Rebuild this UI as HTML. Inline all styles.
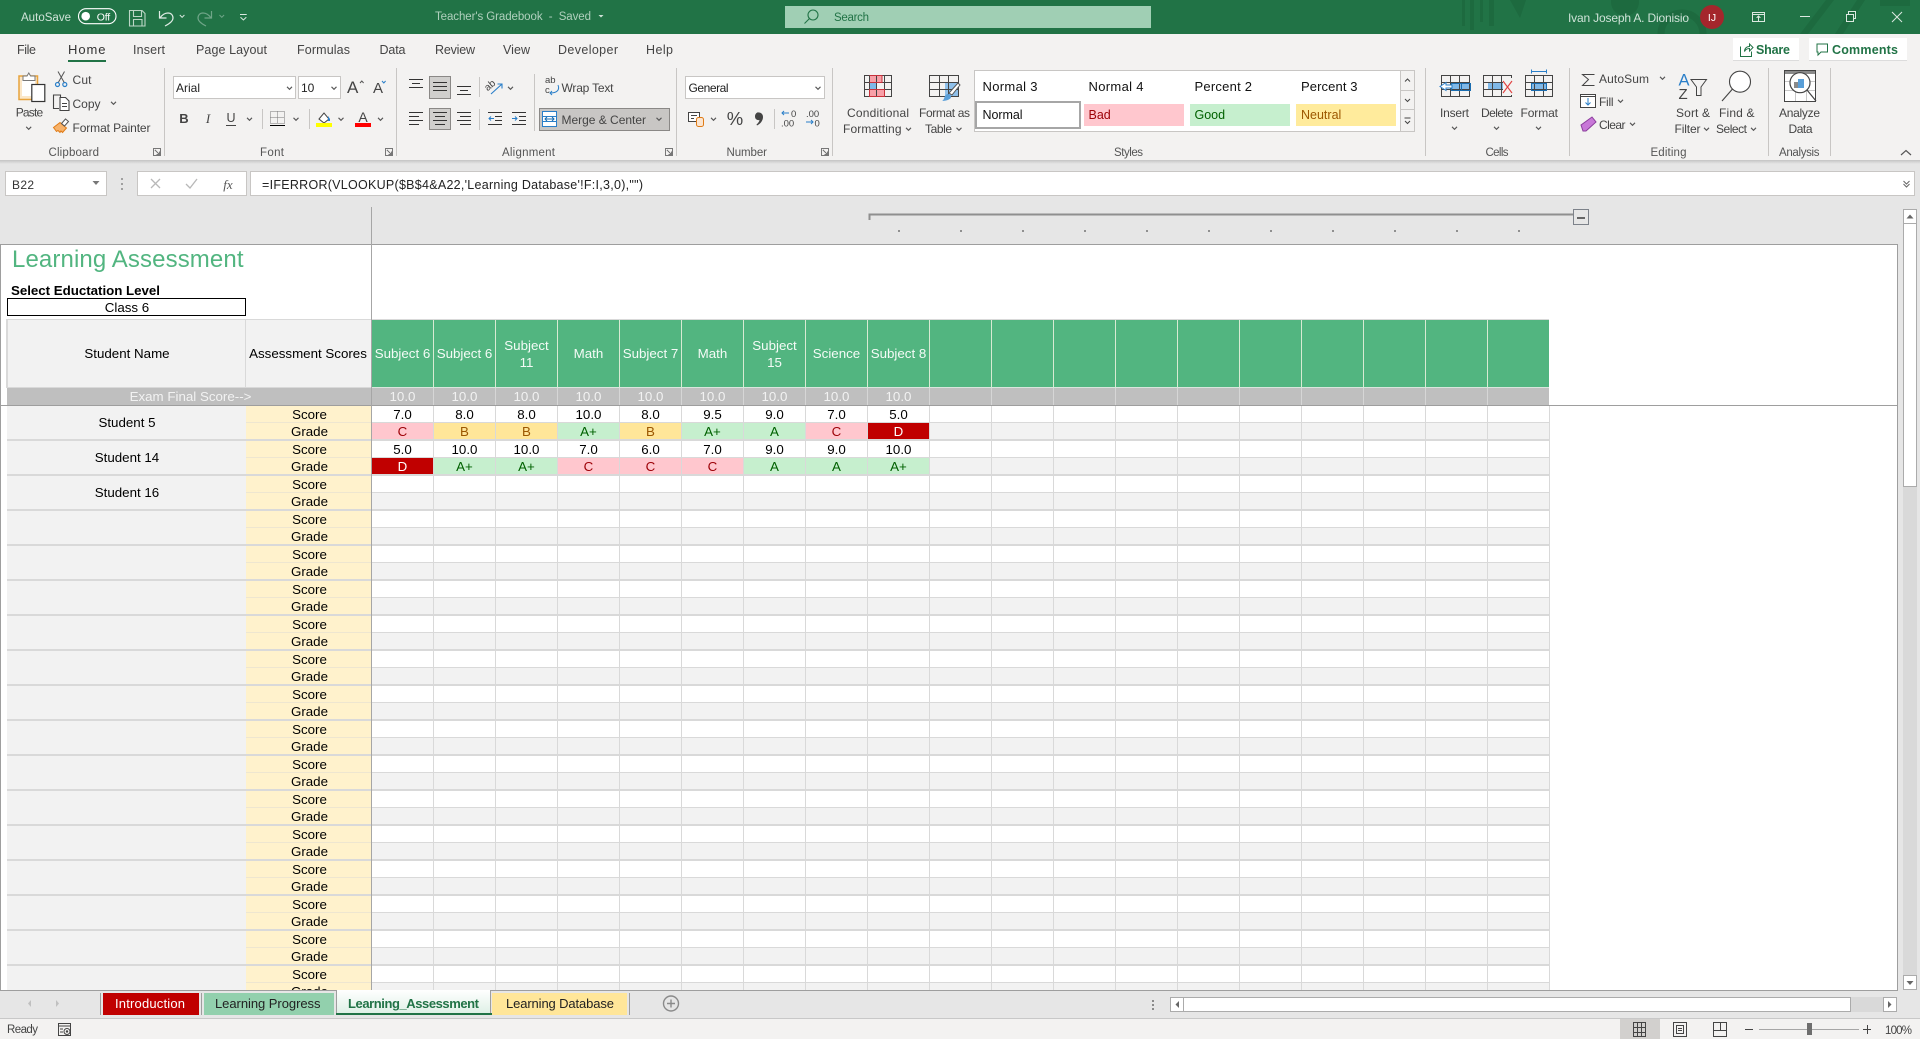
<!DOCTYPE html>
<html><head><meta charset="utf-8"><title>Teacher's Gradebook - Excel</title>
<style>
html,body{margin:0;padding:0;width:1920px;height:1039px;overflow:hidden;background:#e6e6e6}
svg{display:block;font-family:"Liberation Sans",Arial,sans-serif}
text{font-size:12px;fill:#444;white-space:pre}
.m{text-anchor:middle}
.tb{font-size:12.5px}
.h{font-size:13.33px;fill:#f4fbf6;text-anchor:middle}
.g{font-size:13.33px;fill:#f2f2f2;text-anchor:middle}
.s{font-size:13.33px;fill:#000;text-anchor:middle}
.r{fill:#9c0006}.y{fill:#9c5700}.n{fill:#006100}.w{fill:#fff}
.lb{font-size:11.5px;fill:#555}
.cr{shape-rendering:crispEdges}
.i{fill:none;stroke:#444;stroke-width:1}
</style></head><body>
<svg width="1920" height="1039" viewBox="0 0 1920 1039" xmlns="http://www.w3.org/2000/svg">
<defs>
<path id="ch" d="M-2.5-1.2 0 1.3 2.5-1.2" fill="none" stroke="#555" stroke-width="1.1"/>
<pattern id="gp" x="371" y="406" width="62" height="35" patternUnits="userSpaceOnUse">
<rect width="62" height="16" fill="#fff"/><rect y="16" width="62" height="1" fill="#d9d9d9"/><rect y="17" width="62" height="16" fill="#f2f2f2"/><rect y="33" width="62" height="2" fill="#d9d9d9"/><rect width="1" height="35" fill="#d9d9d9"/></pattern>
<pattern id="yp" x="246" y="406" width="125" height="35" patternUnits="userSpaceOnUse">
<rect width="125" height="33" fill="#fff2cc"/><rect y="16" width="125" height="1" fill="#eee6d0"/><rect y="33" width="125" height="2" fill="#d9d9d9"/></pattern>
<pattern id="np" x="7" y="406" width="239" height="35" patternUnits="userSpaceOnUse">
<rect width="239" height="33" fill="#f2f2f2"/><rect y="33" width="239" height="2" fill="#d9d9d9"/></pattern>
<linearGradient id="sh" x1="0" y1="0" x2="0" y2="1"><stop offset="0" stop-color="#c4c4c4"/><stop offset="1" stop-color="#e6e6e6"/></linearGradient>
<linearGradient id="at" x1="0" y1="0" x2="0" y2="1"><stop offset="0" stop-color="#fff"/><stop offset="1" stop-color="#dff0e6"/></linearGradient>
</defs>

<!-- sheet -->
<rect class="cr" x="1" y="245" width="1897" height="746" fill="#fff"/>
<rect class="cr" x="0" y="244" width="1898" height="1" fill="#9e9e9e"/>
<rect class="cr" x="0" y="244" width="1" height="746" fill="#9e9e9e"/>
<rect class="cr" x="1897" y="244" width="1" height="746" fill="#9e9e9e"/>

<!-- outline -->
<path class="cr" d="M869.5 220v-5.5H1573" fill="none" stroke="#8f8f8f" stroke-width="2"/>
<rect class="cr" x="1573.5" y="209.5" width="15" height="15" fill="#e6e6e6" stroke="#7d828a"/>
<rect class="cr" x="1577" y="217" width="8" height="2" fill="#666"/>
<g fill="#8f8f8f" class="cr"><rect x="898" y="230" width="2" height="2"/><rect x="960" y="230" width="2" height="2"/><rect x="1022" y="230" width="2" height="2"/><rect x="1084" y="230" width="2" height="2"/><rect x="1146" y="230" width="2" height="2"/><rect x="1208" y="230" width="2" height="2"/><rect x="1270" y="230" width="2" height="2"/><rect x="1332" y="230" width="2" height="2"/><rect x="1394" y="230" width="2" height="2"/><rect x="1456" y="230" width="2" height="2"/><rect x="1518" y="230" width="2" height="2"/></g>

<!-- title block -->
<text x="12" y="267" textLength="231.5" style="font-size:24px;fill:#52b580">Learning Assessment</text>
<text x="11" y="295" textLength="149" style="font-size:13.33px;font-weight:bold;fill:#000">Select Eductation Level</text>
<rect class="cr" x="7.5" y="298.5" width="238" height="17" fill="#fff" stroke="#000" stroke-width="1"/>
<text class="s" x="127" y="312">Class 6</text>

<!-- header -->
<rect class="cr" x="6" y="319" width="365" height="69" fill="#d9d9d9"/>
<rect class="cr" x="8" y="320" width="237" height="67" fill="#f2f2f2"/>
<rect class="cr" x="246" y="320" width="125" height="67" fill="#f2f2f2"/>
<rect class="cr" x="371" y="320" width="1178" height="67" fill="#52b580"/>
<rect class="cr" x="371" y="319" width="1178" height="1" fill="#d9d9d9"/>
<rect class="cr" x="371" y="387" width="1178" height="1" fill="#d9e6dd"/>
<g fill="#d9ead3" class="cr"><rect x="433" y="320" width="1" height="67"/><rect x="495" y="320" width="1" height="67"/><rect x="557" y="320" width="1" height="67"/><rect x="619" y="320" width="1" height="67"/><rect x="681" y="320" width="1" height="67"/><rect x="743" y="320" width="1" height="67"/><rect x="805" y="320" width="1" height="67"/><rect x="867" y="320" width="1" height="67"/><rect x="929" y="320" width="1" height="67"/><rect x="991" y="320" width="1" height="67"/><rect x="1053" y="320" width="1" height="67"/><rect x="1115" y="320" width="1" height="67"/><rect x="1177" y="320" width="1" height="67"/><rect x="1239" y="320" width="1" height="67"/><rect x="1301" y="320" width="1" height="67"/><rect x="1363" y="320" width="1" height="67"/><rect x="1425" y="320" width="1" height="67"/><rect x="1487" y="320" width="1" height="67"/></g>
<text class="s" x="127" y="358">Student Name</text>
<text class="s" x="308" y="358">Assessment Scores</text>
<g transform="translate(.5 0)">
<text class="h" x="402" y="358">Subject 6</text>
<text class="h" x="464" y="358">Subject 6</text>
<text class="h" x="526" y="350">Subject</text><text class="h" x="526" y="367">11</text>
<text class="h" x="588" y="358">Math</text>
<text class="h" x="650" y="358">Subject 7</text>
<text class="h" x="712" y="358">Math</text>
<text class="h" x="774" y="350">Subject</text><text class="h" x="774" y="367">15</text>
<text class="h" x="836" y="358">Science</text>
<text class="h" x="898" y="358">Subject 8</text>
</g>

<!-- exam row -->
<rect class="cr" x="7" y="388" width="1542" height="17" fill="#bfbfbf"/>
<g fill="#d6d6d6" class="cr"><rect x="371" y="388" width="1" height="17"/><rect x="433" y="388" width="1" height="17"/><rect x="495" y="388" width="1" height="17"/><rect x="557" y="388" width="1" height="17"/><rect x="619" y="388" width="1" height="17"/><rect x="681" y="388" width="1" height="17"/><rect x="743" y="388" width="1" height="17"/><rect x="805" y="388" width="1" height="17"/><rect x="867" y="388" width="1" height="17"/><rect x="929" y="388" width="1" height="17"/><rect x="991" y="388" width="1" height="17"/><rect x="1053" y="388" width="1" height="17"/><rect x="1115" y="388" width="1" height="17"/><rect x="1177" y="388" width="1" height="17"/><rect x="1239" y="388" width="1" height="17"/><rect x="1301" y="388" width="1" height="17"/><rect x="1363" y="388" width="1" height="17"/><rect x="1425" y="388" width="1" height="17"/><rect x="1487" y="388" width="1" height="17"/></g>
<text class="g" x="190.500" y="401">Exam Final Score--&gt;</text>
<g transform="translate(.5 0)"><text class="g" x="402" y="401">10.0</text><text class="g" x="464" y="401">10.0</text><text class="g" x="526" y="401">10.0</text><text class="g" x="588" y="401">10.0</text><text class="g" x="650" y="401">10.0</text><text class="g" x="712" y="401">10.0</text><text class="g" x="774" y="401">10.0</text><text class="g" x="836" y="401">10.0</text><text class="g" x="898" y="401">10.0</text></g>

<!-- body grid -->
<rect class="cr" x="7" y="406" width="239" height="585" fill="url(#np)"/>
<rect class="cr" x="246" y="406" width="125" height="585" fill="url(#yp)"/>
<rect class="cr" x="371" y="406" width="1179" height="585" fill="url(#gp)"/>
<rect class="cr" x="0" y="405" width="1898" height="1" fill="#9e9e9e"/>
<rect class="cr" x="371" y="207" width="1" height="784" fill="#a6a6a6"/>

<!-- grade fills -->
<g class="cr">
<rect x="372" y="423" width="61" height="16" fill="#ffc7ce"/><rect x="434" y="423" width="61" height="16" fill="#ffe699"/><rect x="496" y="423" width="61" height="16" fill="#ffe699"/><rect x="558" y="423" width="61" height="16" fill="#c6efce"/><rect x="620" y="423" width="61" height="16" fill="#ffe699"/><rect x="682" y="423" width="61" height="16" fill="#c6efce"/><rect x="744" y="423" width="61" height="16" fill="#c6efce"/><rect x="806" y="423" width="61" height="16" fill="#ffc7ce"/><rect x="868" y="423" width="61" height="16" fill="#c00000"/>
<rect x="372" y="458" width="61" height="16" fill="#c00000"/><rect x="434" y="458" width="61" height="16" fill="#c6efce"/><rect x="496" y="458" width="61" height="16" fill="#c6efce"/><rect x="558" y="458" width="61" height="16" fill="#ffc7ce"/><rect x="620" y="458" width="61" height="16" fill="#ffc7ce"/><rect x="682" y="458" width="61" height="16" fill="#ffc7ce"/><rect x="744" y="458" width="61" height="16" fill="#c6efce"/><rect x="806" y="458" width="61" height="16" fill="#c6efce"/><rect x="868" y="458" width="61" height="16" fill="#c6efce"/>
</g>
<g transform="translate(.5 0)">
<text class="s" x="402" y="419">7.0</text><text class="s" x="464" y="419">8.0</text><text class="s" x="526" y="419">8.0</text><text class="s" x="588" y="419">10.0</text><text class="s" x="650" y="419">8.0</text><text class="s" x="712" y="419">9.5</text><text class="s" x="774" y="419">9.0</text><text class="s" x="836" y="419">7.0</text><text class="s" x="898" y="419">5.0</text>
<text class="s r" x="402" y="436">C</text><text class="s y" x="464" y="436">B</text><text class="s y" x="526" y="436">B</text><text class="s n" x="588" y="436">A+</text><text class="s y" x="650" y="436">B</text><text class="s n" x="712" y="436">A+</text><text class="s n" x="774" y="436">A</text><text class="s r" x="836" y="436">C</text><text class="s w" x="898" y="436">D</text>
<text class="s" x="402" y="454">5.0</text><text class="s" x="464" y="454">10.0</text><text class="s" x="526" y="454">10.0</text><text class="s" x="588" y="454">7.0</text><text class="s" x="650" y="454">6.0</text><text class="s" x="712" y="454">7.0</text><text class="s" x="774" y="454">9.0</text><text class="s" x="836" y="454">9.0</text><text class="s" x="898" y="454">10.0</text>
<text class="s w" x="402" y="471">D</text><text class="s n" x="464" y="471">A+</text><text class="s n" x="526" y="471">A+</text><text class="s r" x="588" y="471">C</text><text class="s r" x="650" y="471">C</text><text class="s r" x="712" y="471">C</text><text class="s n" x="774" y="471">A</text><text class="s n" x="836" y="471">A</text><text class="s n" x="898" y="471">A+</text>
</g>
<text class="s" x="127" y="427">Student 5</text><text class="s" x="127" y="462">Student 14</text><text class="s" x="127" y="497">Student 16</text>
<g transform="translate(.5 0)">
<text class="s" x="309" y="419">Score</text><text class="s" x="309" y="436">Grade</text>
<text class="s" x="309" y="454">Score</text><text class="s" x="309" y="471">Grade</text>
<text class="s" x="309" y="489">Score</text><text class="s" x="309" y="506">Grade</text>
<text class="s" x="309" y="524">Score</text><text class="s" x="309" y="541">Grade</text>
<text class="s" x="309" y="559">Score</text><text class="s" x="309" y="576">Grade</text>
<text class="s" x="309" y="594">Score</text><text class="s" x="309" y="611">Grade</text>
<text class="s" x="309" y="629">Score</text><text class="s" x="309" y="646">Grade</text>
<text class="s" x="309" y="664">Score</text><text class="s" x="309" y="681">Grade</text>
<text class="s" x="309" y="699">Score</text><text class="s" x="309" y="716">Grade</text>
<text class="s" x="309" y="734">Score</text><text class="s" x="309" y="751">Grade</text>
<text class="s" x="309" y="769">Score</text><text class="s" x="309" y="786">Grade</text>
<text class="s" x="309" y="804">Score</text><text class="s" x="309" y="821">Grade</text>
<text class="s" x="309" y="839">Score</text><text class="s" x="309" y="856">Grade</text>
<text class="s" x="309" y="874">Score</text><text class="s" x="309" y="891">Grade</text>
<text class="s" x="309" y="909">Score</text><text class="s" x="309" y="926">Grade</text>
<text class="s" x="309" y="944">Score</text><text class="s" x="309" y="961">Grade</text>
<text class="s" x="309" y="979">Score</text><text class="s" x="309" y="996">Grade</text>
</g>

<!-- vertical scrollbar -->
<rect class="cr" x="1903" y="209" width="14" height="781" fill="#d9d9d9"/>
<rect class="cr" x="1903.5" y="223.5" width="13" height="263" fill="#fff" stroke="#ababab"/>
<rect class="cr" x="1903.5" y="209.5" width="13" height="14" fill="#fff" stroke="#ababab"/>
<path d="M1906.5 218.5h7l-3.5-4z" fill="#666"/>
<rect class="cr" x="1903.5" y="975.5" width="13" height="14" fill="#fff" stroke="#ababab"/>
<path d="M1906.5 981h7l-3.5 4z" fill="#666"/>

<!-- tab bar -->
<rect class="cr" x="0" y="990" width="1920" height="28" fill="#e6e6e6"/>
<rect class="cr" x="0" y="990" width="1898" height="1" fill="#9e9e9e"/>
<rect class="cr" x="0" y="1018" width="1920" height="1" fill="#c8c8c8"/>
<path d="M31 1000v7l-3-3.5zM56 1000v7l3-3.5z" fill="#c0c0c0"/>
<rect class="cr" x="100" y="993" width="1" height="22" fill="#9e9e9e"/>
<rect class="cr" x="103" y="993" width="96" height="22" fill="#c00000"/>
<text x="115" y="1008" textLength="70" style="font-size:13px;fill:#fff">Introduction</text>
<rect class="cr" x="201" y="993" width="1" height="22" fill="#9e9e9e"/>
<rect class="cr" x="204" y="993" width="130" height="22" fill="#92d0ad"/>
<text x="215" y="1008" textLength="105.5" style="font-size:13px;fill:#222">Learning Progress</text>
<rect class="cr" x="336" y="990" width="155" height="25" fill="#9e9e9e"/>
<rect class="cr" x="337" y="990" width="153" height="23" fill="url(#at)"/>
<rect class="cr" x="336" y="1013" width="156" height="2" fill="#217346"/>
<text x="348" y="1008" textLength="131" style="font-size:13px;font-weight:bold;fill:#217346">Learning_Assessment</text>
<rect class="cr" x="492" y="993" width="135" height="22" fill="#ffe699"/>
<text x="506" y="1008" textLength="108" style="font-size:13px;fill:#222">Learning Database</text>
<rect class="cr" x="629" y="993" width="1" height="22" fill="#9e9e9e"/>
<circle cx="671" cy="1003.5" r="7.5" fill="none" stroke="#8a8a8a" stroke-width="1.4"/>
<path d="M667 1003.5h8M671 999.5v8" stroke="#8a8a8a" stroke-width="1.4"/>
<g fill="#8a8a8a" class="cr"><rect x="1152" y="1000" width="2" height="2"/><rect x="1152" y="1004" width="2" height="2"/><rect x="1152" y="1008" width="2" height="2"/></g>
<rect class="cr" x="1170" y="997" width="727" height="15" fill="#d9d9d9"/>
<rect class="cr" x="1170.5" y="997.5" width="13" height="14" fill="#fff" stroke="#ababab"/>
<path d="M1179 1001v7l-3.5-3.5z" fill="#666"/>
<rect class="cr" x="1183.5" y="997.5" width="667" height="14" fill="#fff" stroke="#ababab"/>
<rect class="cr" x="1883.5" y="997.5" width="13" height="14" fill="#fff" stroke="#ababab"/>
<path d="M1888 1001v7l3.5-3.5z" fill="#666"/>

<!-- status bar -->
<rect class="cr" x="0" y="1019" width="1920" height="20" fill="#f3f2f1"/>
<text x="7" y="1033" textLength="31" style="font-size:11.5px;fill:#444">Ready</text>
<rect x="58.5" y="1023.5" width="12" height="12" class="i"/><path d="M58.5 1026h12M60 1029h3M60 1032h3" class="i"/><circle cx="67" cy="1031.5" r="3" fill="#f3f2f1" stroke="#444"/><circle cx="67" cy="1031.5" r="1.2" fill="#444"/>
<rect class="cr" x="1620" y="1019" width="40" height="20" fill="#d2d0ce"/>
<path class="cr" d="M1633.5 1022.5h12v14h-12zM1633.5 1027.5h12M1633.5 1032.5h12M1637.5 1022.5v14M1641.5 1022.5v14" fill="none" stroke="#444"/>
<path class="cr" d="M1673.5 1022.5h13v14h-13zM1676.5 1025.5h7v8h-7zM1678 1028.5h4M1678 1030.5h4" fill="none" stroke="#444"/>
<path class="cr" d="M1713.5 1022.5h13v14h-13zM1713.5 1030.5h13M1720.5 1022.5v8" fill="none" stroke="#444"/>
<rect class="cr" x="1745" y="1029" width="8" height="1" fill="#444"/>
<rect class="cr" x="1759" y="1029" width="100" height="1" fill="#a6a6a6"/>
<rect class="cr" x="1807" y="1023" width="5" height="12" fill="#6e6e6e"/>
<path class="cr" d="M1863 1029.5h8M1867.5 1025v9" stroke="#444"/>
<text x="1885" y="1034" textLength="27" style="font-size:11.5px;fill:#444">100%</text>

<!-- title bar -->
<rect class="cr" x="0" y="0" width="1920" height="34" fill="#217346"/>
<g fill="#1d6a3f">
<rect x="1462" y="0" width="3" height="26"/><rect x="1470" y="0" width="4" height="30"/><rect x="1480" y="0" width="3" height="22"/><rect x="1489" y="0" width="5" height="26"/>
<path d="M1510 0h16l-6 18z"/><circle cx="1625" cy="2" r="14"/><circle cx="1682" cy="34" r="21" fill="none" stroke="#1d6a3f" stroke-width="7"/>
<path d="M1800 34l26-34h8l-26 34zM1835 34l22-34h8l-22 34zM1880 0h30v6h-30z"/>
</g>
<text x="21" y="21" textLength="50" style="font-size:11.5px;fill:#cfe3d8">AutoSave</text>
<rect x="78.5" y="8.7" width="37.500" height="15" rx="7.500" fill="none" stroke="#fff" stroke-width="1.100"/>
<circle cx="85.700" cy="16.200" r="4.300" fill="#fff"/>
<text x="96.700" y="20.300" textLength="13.500" style="font-size:10.500px;fill:#fff">Off</text>
<path d="M129.500 10.500h12.500l3 3v12.500h-15.500zM133.500 10.500v6h8v-6M133.500 26v-6.500h8.500v6.500" fill="none" stroke="#bcd6c6" stroke-width="1.100"/>
<path d="M159.500 11v7h7M160 18c2-3 5-5 8-5 3 0 5 2 5 5 0 3-4 6-8 8" fill="none" stroke="#e0ece5" stroke-width="1.200"/>
<path d="M179.800 15l2.300 2.300 2.300-2.300" fill="none" stroke="#dce9e1"/>
<path d="M211.500 11v7h-7M211 18c-2-3-5-5-8-5-3 0-5 2-5 5 0 3 4 6 8 8" fill="none" stroke="#6fa588" stroke-width="1.200"/>
<path d="M219.500 15l2.300 2.300 2.300-2.300" fill="none" stroke="#6fa588"/>
<path d="M240 14.500h6.700M240.500 17.300l2.900 2.700 2.900-2.700" fill="none" stroke="#dce9e1"/>
<text x="435" y="20" textLength="156" style="font-size:11.5px;fill:#b0d0bd">Teacher's Gradebook  -  Saved</text>
<path d="M598.5 15h5l-2.500 2.500z" fill="#cfe3d8"/>
<rect class="cr" x="785" y="6" width="366" height="22" fill="#a0cfb4"/>
<circle cx="813" cy="15" r="5" fill="none" stroke="#217346" stroke-width="1.100"/><path d="M809.5 18.500l-5 5" stroke="#217346" stroke-width="1.100"/>
<text x="834" y="21" textLength="35" style="font-size:11.5px;fill:#217346">Search</text>
<text x="1568" y="22" textLength="121" style="font-size:12px;fill:#cfe3d8">Ivan Joseph A. Dionisio</text>
<circle cx="1712" cy="17" r="12" fill="#a4262c"/>
<text class="m" x="1712" y="21" style="font-size:10.5px;fill:#fff">IJ</text>
<path class="cr" d="M1752.5 12.500h12v9h-12zM1752.5 14.500h12M1758.5 21v-5M1756.5 18l2-2 2 2" fill="none" stroke="#dce9e1"/>
<path class="cr" d="M1800 16.500h10" stroke="#dce9e1"/>
<path class="cr" d="M1846.5 14.500h7v7h-7zM1848.5 14v-2.500h7v7h-2" fill="none" stroke="#dce9e1"/>
<path d="M1892 12l10 10M1902 12l-10 10" stroke="#dce9e1"/>

<!-- ribbon -->
<rect class="cr" x="0" y="34" width="1920" height="126" fill="#f3f2f1"/>
<rect class="cr" x="0" y="160" width="1920" height="4" fill="url(#sh)"/>
<text class="tb" x="17" y="54" textLength="19">File</text>
<text class="tb" x="68" y="54" textLength="37.5" style="font-size:13px;fill:#333">Home</text>
<rect class="cr" x="68" y="60" width="38" height="2" fill="#217346"/>
<text class="tb" x="133" y="54" textLength="32">Insert</text>
<text class="tb" x="196" y="54" textLength="71">Page Layout</text>
<text class="tb" x="297" y="54" textLength="53">Formulas</text>
<text class="tb" x="379.5" y="54" textLength="26">Data</text>
<text class="tb" x="435" y="54" textLength="40">Review</text>
<text class="tb" x="503" y="54" textLength="27">View</text>
<text class="tb" x="558" y="54" textLength="60">Developer</text>
<text class="tb" x="646" y="54" textLength="27">Help</text>
<rect class="cr" x="1733" y="38" width="66" height="22" fill="#fff"/><rect class="cr" x="1733" y="60" width="66" height="1" fill="#dcdcdc"/>
<rect class="cr" x="1809" y="38" width="98" height="22" fill="#fff"/><rect class="cr" x="1809" y="60" width="98" height="1" fill="#dcdcdc"/>
<path d="M1740.5 46.500v10h11v-5M1744.500 51.500c0-3 2-5 5-5v-2.500l3.500 3.500-3.500 3.500v-2.500c-2 0-4 1-5 3z" fill="none" stroke="#217346"/>
<text x="1756" y="54" textLength="34" style="font-size:12.5px;fill:#217346;font-weight:bold">Share</text>
<path d="M1817 44h10.500v8h-6.500l-3 3v-3h-1z" fill="none" stroke="#217346"/>
<text x="1832" y="54" textLength="66" style="font-size:12.5px;fill:#217346;font-weight:bold">Comments</text>

<!-- separators -->
<g fill="#c8c6c4" class="cr"><rect x="164" y="68" width="1" height="88"/><rect x="396" y="68" width="1" height="88"/><rect x="676" y="68" width="1" height="88"/><rect x="832" y="68" width="1" height="88"/><rect x="1425" y="68" width="1" height="88"/><rect x="1569" y="68" width="1" height="88"/><rect x="1768" y="68" width="1" height="88"/><rect x="1830" y="68" width="1" height="88"/><rect x="479" y="77" width="1" height="20"/><rect x="479" y="109" width="1" height="21"/><rect x="534" y="74" width="1" height="57"/><rect x="262" y="109" width="1" height="20"/><rect x="309" y="109" width="1" height="20"/><rect x="774" y="109" width="1" height="20"/></g>
<!-- group labels -->
<text class="lb" x="48.5" y="156" textLength="50.5">Clipboard</text>
<text class="lb" x="260" y="156" textLength="24">Font</text>
<text class="lb" x="502" y="156" textLength="53">Alignment</text>
<text class="lb" x="726.5" y="156" textLength="40.5">Number</text>
<text class="lb" x="1114" y="156" textLength="29">Styles</text>
<text class="lb" x="1485.5" y="156" textLength="23">Cells</text>
<text class="lb" x="1650.5" y="156" textLength="36">Editing</text>
<text class="lb" x="1779" y="156" textLength="40.5">Analysis</text>
<g fill="none" stroke="#777"><path class="cr" d="M153.5 148.500h7v7h-7zM155 150l4 4M159.5 151.500v3h-3"/><path class="cr" d="M385.5 148.500h7v7h-7zM387 150l4 4M391.5 151.500v3h-3"/><path class="cr" d="M665.5 148.500h7v7h-7zM667 150l4 4M671.5 151.500v3h-3"/><path class="cr" d="M821.5 148.500h7v7h-7zM823 150l4 4M827.5 151.500v3h-3"/></g>
<path d="M1901 155l5-4.500 5 4.500" fill="none" stroke="#555" stroke-width="1.200"/>

<!-- clipboard -->
<path d="M19 76h18.500v23.500H19z" fill="#fbe7c8" stroke="#e8a33c" stroke-width="1.500"/>
<rect x="22" y="80" width="13" height="16" fill="#fff"/>
<path d="M23 80.500v-4.500h4l1.800-3 1.800 3h4.400v4.500z" fill="#fff" stroke="#777"/>
<rect x="31.800" y="84.500" width="13" height="17" fill="#fff" stroke="#333" stroke-width="1.200"/>
<text x="15.700" y="116.500" textLength="27.500" style="font-size:12px">Paste</text>
<use href="#ch" x="28.700" y="128"/>
<path d="M58 71.500l6.500 11.500M64.500 71.500L58 83" stroke="#555" fill="none"/><circle cx="57.500" cy="84.500" r="2" fill="none" stroke="#2a7fc9" stroke-width="1.200"/><circle cx="64.800" cy="84.500" r="2" fill="none" stroke="#2a7fc9" stroke-width="1.200"/>
<text x="72.5" y="84" textLength="19">Cut</text>
<path d="M59 108.500h-5.500v-13.500h7v2" fill="none" stroke="#444" stroke-width="1.100"/><path d="M60 97.500h5.500l3.500 3.500v9.500h-9z" fill="#fff" stroke="#444" stroke-width="1.100"/><path d="M62 103.500h5M62 106.500h5" stroke="#444"/>
<text x="72.5" y="108" textLength="28">Copy</text><use href="#ch" x="113.5" y="103"/>
<path d="M53.500 127.500l6.500-5 6.500 5.500-4 4.500-1.500-1.500-1 1.500-2-2-1.500 1z" fill="#f7b26a" stroke="#e07b16"/><path d="M61.500 123.500l4-4.500 3 2.500-4 4.500z" fill="#fff" stroke="#555"/>
<text x="72.5" y="132" textLength="78">Format Painter</text>

<!-- font -->
<rect class="cr" x="173.5" y="76.500" width="122" height="22" fill="#fff" stroke="#c8c6c4"/>
<text x="176" y="92" style="fill:#222">Arial</text><use href="#ch" x="289.500" y="88"/>
<rect class="cr" x="298.5" y="76.500" width="42" height="22" fill="#fff" stroke="#c8c6c4"/>
<text x="301" y="92" style="fill:#222">10</text><use href="#ch" x="334" y="88"/>
<text x="347" y="93" style="font-size:17px">A</text><path d="M360 83l1.800-2 1.800 2" fill="none" stroke="#555"/>
<text x="373" y="93" style="font-size:15px">A</text><path d="M382 81l1.800 2 1.800-2" fill="none" stroke="#2a7fc9"/>
<text class="m" x="184" y="123" style="font-size:13px;font-weight:bold;fill:#444">B</text>
<text class="m" x="208" y="123" style="font-size:13px;font-style:italic;fill:#444;font-family:'Liberation Serif',serif">I</text>
<text class="m" x="231" y="122" style="font-size:12.5px;fill:#444">U</text><path class="cr" d="M226 125.500h10" stroke="#444"/>
<use href="#ch" x="249.500" y="119"/>
<path class="cr" d="M270.5 111.500h14v12h-14zM277.5 111.500v12M270.5 117.500h14" fill="none" stroke="#777" stroke-dasharray="1 1"/><rect class="cr" x="270" y="125" width="15" height="1" fill="#000"/>
<use href="#ch" x="296" y="119"/>
<path d="M319 119l5-6 5 6-5 4z" fill="#fff" stroke="#444"/><path d="M328 116l2 3v2h-2z" fill="#2a7fc9"/>
<rect class="cr" x="316" y="123" width="16" height="4" fill="#ffff00"/>
<use href="#ch" x="341" y="119"/>
<text class="m" x="363" y="122" style="font-size:14px;fill:#444">A</text>
<rect class="cr" x="355" y="123" width="16" height="4" fill="#ff0000"/>
<use href="#ch" x="380.5" y="119"/>

<!-- alignment -->
<rect class="cr" x="429.5" y="76.500" width="21" height="22" fill="#d0cfcd" stroke="#8a8886"/>
<rect class="cr" x="429.5" y="108.500" width="21" height="21" fill="#d0cfcd" stroke="#8a8886"/>
<rect class="cr" x="539.5" y="108.500" width="130" height="22" fill="#c8c6c4" stroke="#8a8886"/>
<g class="cr" fill="none" stroke="#333">
<path d="M409 79.500h14M412 83.500h8M409 87.500h14"/>
<path d="M433 82.500h14M433 86.500h14M433 90.500h14"/>
<path d="M457 86.500h14M460 90.500h8M457 94.500h14"/>
<path d="M409 112.500h14M409 116.500h10M409 120.500h14M409 124.500h10"/>
<path d="M433 112.500h14M435 116.500h10M433 120.500h14M435 124.500h10"/>
<path d="M457 112.500h14M460 116.500h11M457 120.500h14M460 124.500h11"/>
<path d="M488 112.500h14M495 116.500h7M495 120.500h7M488 124.500h14"/>
<path d="M512 112.500h14M519 116.500h7M519 120.500h7M512 124.500h14"/>
</g>
<path d="M494 118.500h-5m2-2-2 2 2 2M512 118.500h5m-2-2 2 2-2 2" fill="none" stroke="#2a7fc9"/>
<text x="486" y="89" transform="rotate(-40 490 88)" style="font-size:10px;fill:#444">ab</text><path d="M491 94l11-10m-4.500 0h4.500v4.500" fill="none" stroke="#2a7fc9" stroke-width="1.100"/>
<use href="#ch" x="510.500" y="88"/>
<text x="545" y="83" style="font-size:9.5px">ab</text><text x="545" y="93" style="font-size:9.5px">c</text><path d="M558 85c2 5-1 8-8 8m2-2-2 2 2 2" fill="none" stroke="#2a7fc9"/>
<text x="561.5" y="92" textLength="52">Wrap Text</text>
<path class="cr" d="M542.5 111.500h14v15h-14zM542.5 116.500h14M542.5 121.500h14" fill="#fff" stroke="#2a7fc9"/><path d="M545 119h9m-7-2-2 2 2 2m5-4 2 2-2 2" fill="none" stroke="#1a6db0"/>
<text x="561.5" y="124" textLength="84.5">Merge &amp; Center</text><use href="#ch" x="659" y="119"/>

<!-- number -->
<rect class="cr" x="685.5" y="76.500" width="139" height="22" fill="#fff" stroke="#c8c6c4"/>
<text x="688.5" y="92" textLength="40" style="fill:#222">General</text><use href="#ch" x="818" y="88"/>
<rect x="688.5" y="112.500" width="11" height="9" fill="#fff" stroke="#444"/><rect x="696.5" y="117.500" width="7" height="9" rx="2" fill="#fbe5d0" stroke="#e07b16"/><path d="M691 115.500h6M691 118.500h3" stroke="#444"/>
<use href="#ch" x="713.5" y="119"/>
<text class="m" x="735" y="125" style="font-size:18.5px;fill:#444">%</text>
<path d="M757 112.500c3-.5 6 1 6 4.500 0 4-3 7-6 8.500l-.5-1c1.500-1.200 2.800-2.800 3-4.500-2.500.5-4.500-1-4.500-3.500 0-2 1-3.500 2.500-4z" fill="#444"/>
<path d="M789 113h-7m2-2-2 2 2 2" fill="none" stroke="#2a7fc9"/><text x="791" y="117" style="font-size:9.5px">0</text><text x="781" y="126.500" style="font-size:9.500px">.00</text>
<text x="806" y="117" style="font-size:9.5px">.00</text><path d="M806 122h7m-2-2 2 2-2 2" fill="none" stroke="#2a7fc9"/><text x="814.5" y="126.500" style="font-size:9.5px">0</text>

<!-- conditional / table -->
<g class="cr"><rect x="869" y="76" width="13" height="6" fill="#f8a0a8"/><rect x="869" y="83" width="8" height="6" fill="#7fb8e8"/><rect x="869" y="90" width="15" height="6" fill="#f8a0a8"/></g>
<path class="cr" d="M864.5 75.500h27v21h-27zM864.5 82.500h27M864.5 89.500h27M869.5 75.500v21M876.5 75.500v21M884.5 75.500v21" fill="none" stroke="#444"/>
<path class="cr" d="M869.5 75.500h12.500v7h-12.500M869.500 89.500h15v7h-15z" fill="none" stroke="#c8323c"/>
<text x="847" y="117" textLength="62">Conditional</text>
<text x="843" y="133" textLength="58.5">Formatting</text><use href="#ch" x="908.500" y="129"/>
<rect class="cr" x="945" y="82" width="14" height="15" fill="#8fc0ea"/>
<path class="cr" d="M929.5 75.500h29v21h-29zM929.5 82.500h29M929.5 89.500h29M939.5 75.500v21M948.5 75.500v21" fill="none" stroke="#444"/>
<path d="M960 85l-8 10-3-2 9-10z" fill="#fff" stroke="#555"/><path d="M947 94c3 0 4 1 4 3s-4 4-9 4c2-1 2-3 3-5z" fill="#5a9fd8"/>
<text x="919" y="117" textLength="51">Format as</text>
<text x="925" y="133" textLength="27">Table</text><use href="#ch" x="959" y="129"/>

<!-- styles -->
<rect class="cr" x="974.5" y="70.500" width="440" height="61" fill="#fff" stroke="#c8c6c4"/>
<text x="982.5" y="91" textLength="55" style="font-size:13px;fill:#111">Normal 3</text>
<text x="1088.5" y="91" textLength="55" style="font-size:13px;fill:#111">Normal 4</text>
<text x="1194.5" y="91" textLength="57.5" style="font-size:13px;fill:#111">Percent 2</text>
<text x="1301" y="91" textLength="56.5" style="font-size:13px;fill:#111">Percent 3</text>
<rect class="cr" x="976" y="102" width="104" height="26" fill="#fff" stroke="#a6a6a6" stroke-width="2"/>
<text x="982.5" y="119" textLength="40" style="font-size:12.5px;fill:#111">Normal</text>
<rect class="cr" x="1084" y="104" width="100" height="22" fill="#ffc7ce"/><text x="1088.5" y="119" style="font-size:12.5px;fill:#9c0006">Bad</text>
<rect class="cr" x="1190" y="104" width="100" height="22" fill="#c6efce"/><text x="1194.5" y="119" style="font-size:12.5px;fill:#006100">Good</text>
<rect class="cr" x="1296" y="104" width="100" height="22" fill="#ffeb9c"/><text x="1301" y="119" style="font-size:12.5px;fill:#9c5700">Neutral</text>
<g class="cr" fill="#f3f2f1" stroke="#c8c6c4"><rect x="1400.5" y="70.500" width="14" height="20"/><rect x="1400.5" y="90.500" width="14" height="19"/><rect x="1400.5" y="109.500" width="14" height="22"/></g>
<path d="M1405 81.500l2.500-2.500 2.500 2.500M1405 99l2.500 2.500 2.500-2.500M1404.5 118h6M1405 121l2.500 2.500 2.500-2.500" fill="none" stroke="#444"/>

<!-- cells -->
<rect class="cr" x="1451" y="83" width="20" height="7" fill="#7fb8e8"/>
<path class="cr" d="M1441.5 75.500h28v21h-28zM1441.5 82.500h28M1441.5 89.500h28M1450.5 75.500v21M1459.500 75.500v21" fill="none" stroke="#444"/>
<path class="cr" d="M1451.5 83.500h19v7h-19zM1461.5 83v7" fill="none" stroke="#1a6db0"/>
<path d="M1452 85h-6v-2.500l-6 4 6 4V88h6z" fill="#fff" stroke="#2a7fc9"/>
<rect class="cr" x="1488" y="83" width="16" height="7" fill="#7fb8e8"/>
<path class="cr" d="M1483.5 75.500h28v21h-28zM1483.5 82.500h28M1483.5 89.500h28M1492.5 75.500v21M1501.5 75.500v21" fill="none" stroke="#444"/>
<rect x="1503" y="78" width="11" height="17" fill="#f3f2f1"/>
<path d="M1503 81l9 12M1512 81l-9 12" stroke="#e04040" stroke-width="1.100"/>
<rect class="cr" x="1532" y="83" width="14" height="7" fill="#7fb8e8"/>
<path class="cr" d="M1525.5 75.500h27v21h-27zM1525.5 82.500h27M1525.5 89.500h27M1534.5 75.500v21M1543.5 75.500v21" fill="none" stroke="#444"/>
<path class="cr" d="M1531.5 83.500h15v7h-15z" fill="none" stroke="#1a6db0"/>
<path class="cr" d="M1531.5 69.500v4M1546.5 69.500v4M1531 71.500h16" fill="none" stroke="#2a7fc9"/>
<text x="1440" y="117" textLength="29">Insert</text>
<text x="1481" y="117" textLength="32">Delete</text>
<text x="1520.5" y="117" textLength="37.5">Format</text>
<use href="#ch" x="1454.500" y="128"/><use href="#ch" x="1496.500" y="128"/><use href="#ch" x="1538.500" y="128"/>

<!-- editing -->
<path d="M1594.5 74.500h-12l6 5-6 6h12" fill="none" stroke="#444"/>
<text x="1599" y="83" textLength="50">AutoSum</text><use href="#ch" x="1662.500" y="78"/>
<path class="cr" d="M1580.5 94.500h15v13h-15z" fill="#fff" stroke="#444"/><path class="cr" d="M1580.5 96.500h15" stroke="#444"/><path d="M1588 98v7m-2.500-2.500 2.500 2.500 2.500-2.500" fill="none" stroke="#2a7fc9"/>
<text x="1599" y="106" textLength="14.5">Fill</text><use href="#ch" x="1620.500" y="101"/>
<path d="M1581 125l11-8 4 5-10 9h-3z" fill="#c878d8" stroke="#8a3c9c"/>
<text x="1599" y="129" textLength="26.5">Clear</text><use href="#ch" x="1632.500" y="124"/>
<text x="1678.500" y="85.300" style="font-size:16.500px;fill:#2a7fc9">A</text><text x="1678.500" y="98.800" style="font-size:15px;fill:#444">Z</text>
<path d="M1691 79.500h15.500l-5.500 7.500v8.500h-4.500V87z" fill="none" stroke="#444"/>
<text x="1676" y="117" textLength="34">Sort &amp;</text>
<text x="1674.5" y="133" textLength="26">Filter</text><use href="#ch" x="1706.500" y="129"/>
<circle cx="1740" cy="81.700" r="10.500" fill="#fff" stroke="#444" stroke-width="1.100"/><path d="M1732.500 89l-10.500 12" stroke="#444" stroke-width="1.100"/>
<text x="1719" y="117" textLength="35.5">Find &amp;</text>
<text x="1716" y="133" textLength="31">Select</text><use href="#ch" x="1753.500" y="129"/>

<!-- analysis -->
<rect class="cr" x="1784.500" y="70.500" width="31" height="31" fill="#fff" stroke="#444"/>
<rect class="cr" x="1785" y="71" width="30" height="3" fill="#8a8a8a"/>
<path class="cr" d="M1785 81.500h30M1785 90.500h30M1795.500 74v27M1806.500 74v27" stroke="#c8c8c8"/>
<circle cx="1800" cy="82.700" r="10" fill="#fff" stroke="#444" stroke-width="1.200"/>
<path d="M1807 90l9 11" stroke="#444" stroke-width="1.200"/>
<rect class="cr" x="1794" y="82" width="4" height="6" fill="#8a8a8a"/><rect class="cr" x="1798" y="79" width="6" height="9" fill="#5a9fd8"/>
<text x="1779" y="117" textLength="41">Analyze</text>
<text x="1788.5" y="133" textLength="24">Data</text>

<!-- formula bar -->
<rect class="cr" x="5.5" y="171.500" width="101" height="24" fill="#fff" stroke="#c8c6c4"/>
<text x="12" y="189" textLength="22" style="font-size:12px;fill:#333">B22</text>
<path d="M92.5 181h7l-3.500 4z" fill="#777"/>
<g fill="#a0a0a0" class="cr"><rect x="121" y="178" width="2" height="2"/><rect x="121" y="183" width="2" height="2"/><rect x="121" y="188" width="2" height="2"/></g>
<rect class="cr" x="137.5" y="171.500" width="109" height="24" fill="#fff" stroke="#c8c6c4"/>
<path d="M151 179l9 9M160 179l-9 9" stroke="#b8b8b8" stroke-width="1.300"/>
<path d="M186 184l4 4 7-9" fill="none" stroke="#b8b8b8" stroke-width="1.300"/>
<text class="m" x="228" y="189" style="font-family:'Liberation Serif',serif;font-style:italic;font-size:13px;fill:#555">fx</text>
<rect class="cr" x="250.5" y="171.500" width="1664" height="24" fill="#fff" stroke="#c8c6c4"/>
<text x="262" y="189" textLength="381" style="font-size:12.5px;fill:#222">=IFERROR(VLOOKUP($B$4&amp;A22,'Learning Database'!F:I,3,0),"")</text>
<path d="M1903.5 181l3 3 3-3M1903.5 184l3 3 3-3" fill="none" stroke="#666"/>
</svg>
</body></html>
